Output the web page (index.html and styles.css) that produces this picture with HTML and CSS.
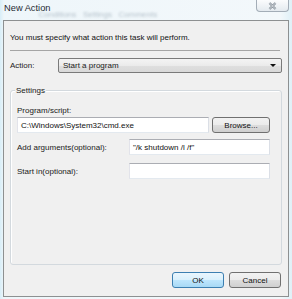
FILE: index.html
```html
<!DOCTYPE html>
<html lang="en">
<head>
    <meta charset="UTF-8">
    <meta name="viewport" content="width=device-width, initial-scale=1.0">
    <title>New Action</title>
    <link rel="stylesheet" href="styles.css">
</head>
<body>
    <div class="window">
        <div class="titlebar">
            <span class="title">New Action</span>
            <span class="ghost">Conditions &nbsp; Settings &nbsp; Comments</span>
            <div class="close">
                <svg width="9" height="8" viewBox="0 0 9 8">
                    <path d="M1.5 1 L7.5 7 M7.5 1 L1.5 7" stroke="#7d8791" stroke-width="2.2" fill="none"/>
                    <path d="M1.5 1 L7.5 7 M7.5 1 L1.5 7" stroke="#f4f6f8" stroke-width="0.8" fill="none"/>
                </svg>
            </div>
        </div>

        <div class="dialog">
            <p class="intro">You must specify what action this task will perform.</p>
            <div class="sep"></div>

            <div class="action-row">
                <span class="action-label">Action:</span>
                <div class="combo">
                    <span>Start a program</span>
                    <span class="arrow"></span>
                </div>
            </div>

            <div class="group">
                <div class="group-title">Settings</div>
                <div class="field-label">Program/script:</div>
                <div class="program-row">
                    <div class="input program">C:\Windows\System32\cmd.exe</div>
                    <div class="btn browse">Browse...</div>
                </div>
                <div class="opt-row">
                    <span class="opt-label">Add arguments(optional):</span>
                    <div class="input opt">"/k shutdown /l /f"</div>
                </div>
                <div class="opt-row start">
                    <span class="opt-label">Start in(optional):</span>
                    <div class="input opt"></div>
                </div>
            </div>

            <div class="buttons">
                <div class="btn ok">OK</div>
                <div class="btn">Cancel</div>
            </div>
        </div>
    </div>
</body>
</html>
```

FILE: styles.css
```css
* {
    box-sizing: border-box;
}
body {
    margin: 0;
    width: 292px;
    height: 299px;
    overflow: hidden;
    font-family: "Liberation Sans", Arial, sans-serif;
    font-size: 8px;
    line-height: 11px;
    color: #1a1a1a;
    background: linear-gradient(90deg, #d8eef8 0px, #eef6fa 4px, #f3f8fb 280px, #dff0f7 292px);
}
.window {
    width: 292px;
    height: 299px;
}
.titlebar {
    height: 20px;
    display: flex;
    align-items: flex-start;
}
.title {
    font-size: 9.3px;
    color: #1e2a33;
    margin: 3px 0 0 4px;
}
.ghost {
    margin: 9px 0 0 -12px;
    font-size: 8px;
    color: #b6c3cc;
    filter: blur(0.8px);
    white-space: nowrap;
}
.close {
    margin-left: auto;
    margin-right: 3px;
    width: 33px;
    height: 12px;
    border: 1px solid #a3adb7;
    border-top: none;
    border-radius: 0 0 4px 4px;
    background: linear-gradient(#fbfcfd, #e4eaef);
    display: flex;
    align-items: center;
    justify-content: center;
}
.dialog {
    width: 286px;
    height: 277px;
    margin-left: 3px;
    border: 1px solid #8d9091;
    background: #f0f0f0;
    padding: 0 6px;
}
.intro {
    margin: 0;
    padding-top: 11px;
    color: #111;
}
.sep {
    margin: 7px 2px 0 0;
    height: 1px;
    background: #a5a5a5;
}
.action-row {
    margin-top: 7px;
    height: 15px;
    display: flex;
    align-items: center;
}
.action-label {
    width: 48px;
}
.combo {
    flex: 1;
    height: 15px;
    border: 1px solid #7a7a7a;
    border-radius: 2px;
    background: linear-gradient(#f4f4f4, #ebebeb 50%, #dfdfdf 51%, #d9d9d9);
    display: flex;
    align-items: center;
    padding: 0 5px 0 4px;
}
.arrow {
    margin-left: auto;
    width: 0;
    height: 0;
    border-left: 3px solid transparent;
    border-right: 3px solid transparent;
    border-top: 3px solid #111;
}
.group {
    margin-top: 17px;
    height: 175px;
    border: 1px solid #d3d9de;
    border-radius: 3px;
    box-shadow: inset 1px 1px 0 #fff;
    padding: 0 11px 0 6px;
}
.group-title {
    display: table;
    margin: -6px 0 0 -2px;
    padding: 0 1px;
    background: #f0f0f0;
}
.field-label {
    margin-top: 9px;
}
.program-row {
    margin-top: 1px;
    display: flex;
    gap: 3px;
}
.input {
    height: 16px;
    background: #fff;
    border: 1px solid;
    border-color: #abadb3 #dbdfe6 #e3e9ef #e2e3ea;
    padding: 2px 3px 0;
    white-space: nowrap;
    color: #111;
}
.program {
    width: 192px;
}
.opt-row {
    margin-top: 6px;
    display: flex;
    align-items: center;
}
.opt-row.start {
    margin-top: 8px;
}
.opt-label {
    width: 112px;
}
.opt {
    flex: 1;
}
.btn {
    height: 16px;
    border: 1px solid #707070;
    border-radius: 3px;
    background: linear-gradient(#f2f2f2, #ebebeb 50%, #dddddd 51%, #cfcfcf);
    display: flex;
    align-items: center;
    justify-content: center;
    color: #111;
}
.browse {
    width: 58px;
}
.buttons {
    margin-top: 7px;
    margin-right: 1px;
    display: flex;
    justify-content: flex-end;
    gap: 5px;
}
.buttons .btn {
    width: 52px;
}
.btn.ok {
    border-color: #3c7fb1;
    background: linear-gradient(#eaf6fd, #d9f0fc 50%, #bee6fd 51%, #a7d9f5);
}
```
